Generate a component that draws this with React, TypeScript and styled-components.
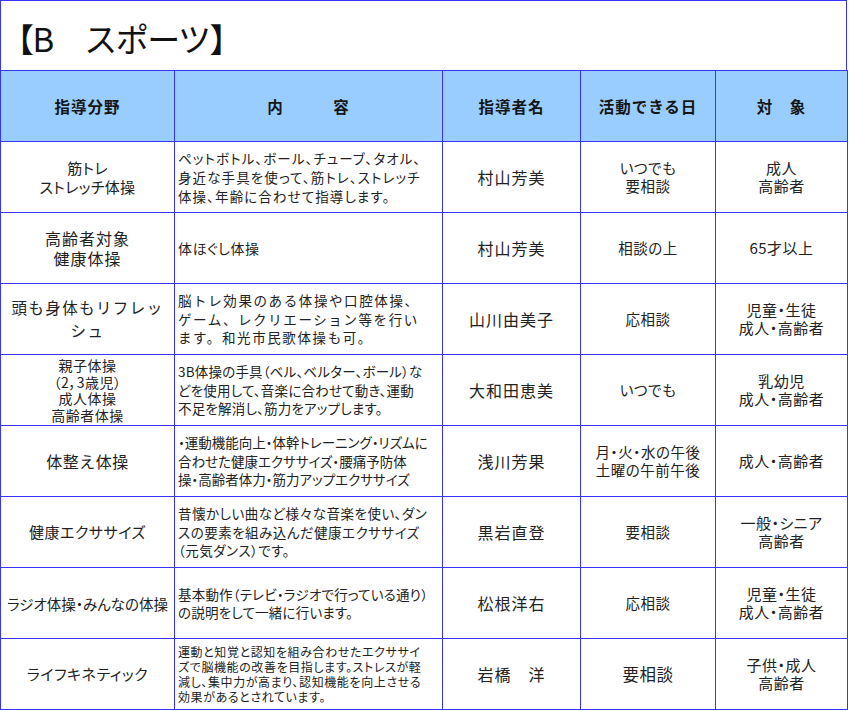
import React from "react";
import styled, { createGlobalStyle } from "styled-components";

const GlobalStyle = createGlobalStyle`
  body {
    margin: 0;
    background: #ffffff;
    font-family: "Noto Sans CJK JP", "Noto Sans", sans-serif;
    color: #222;
  }
`;

const LINE = "#3535ff";

const Sheet = styled.div`
  width: 847px;
`;

const Title = styled.div`
  height: 70px;
  box-sizing: border-box;
  border: 1px solid ${LINE};
  border-bottom: none;
  display: flex;
  align-items: center;
  padding: 4px 0 0 0;
  font-size: 33px;
  color: #111;
  letter-spacing: -1.5px;
`;

const Grid = styled.table`
  width: 847px;
  border-collapse: collapse;
  table-layout: fixed;
`;

const Row = styled.tr`
  height: 71px;
`;

const HeadCell = styled.th`
  border: 1px solid ${LINE};
  background: #99ccff;
  font-size: 15.5px;
  font-weight: bold;
  color: #151515;
  letter-spacing: 1px;
  white-space: pre;
  padding: 0;
`;

type CellProps = {
  $left?: boolean;
  $size: number;
  $lh?: number;
  $ls?: number;
  $palt?: boolean;
};

const Cell = styled.td<CellProps>`
  border: 1px solid ${LINE};
  padding: ${(p) => (p.$left ? "0 0 0 3px" : "0")};
  text-align: ${(p) => (p.$left ? "left" : "center")};
  vertical-align: middle;
  font-size: ${(p) => p.$size}px;
  line-height: ${(p) => p.$lh ?? Math.round(p.$size * 1.3)}px;
  letter-spacing: ${(p) => p.$ls ?? 0}px;
  font-feature-settings: ${(p) => (p.$palt ? '"palt"' : "normal")};
  white-space: pre;
  overflow: hidden;
  color: #222;
`;

type C = { t: string; size: number; lh?: number; ls?: number; palt?: boolean };

type Entry = {
  field: C;
  detail: C;
  name: C;
  days: C;
  target: C;
};

const nm = (t: string, size = 16): C => ({ t, size, ls: 1 });
const dy = (t: string, size = 14.5): C => ({ t, size, lh: 18, palt: true, ls: 0.5 });
const tg = (t: string): C => ({ t, size: 15, lh: 18, palt: true, ls: 0.5 });

const rows: Entry[] = [
  {
    field: { t: "筋トレ\nストレッチ体操", size: 15, lh: 19, palt: true, ls: 0.3 },
    detail: {
      t: "ペットボトル、ボール、チューブ、タオル、\n身近な手具を使って、筋トレ、ストレッチ\n体操、年齢に合わせて指導します。",
      size: 13.5,
      lh: 19,
      palt: true,
      ls: 1.1,
    },
    name: nm("村山芳美"),
    days: dy("いつでも\n要相談"),
    target: tg("成人\n高齢者"),
  },
  {
    field: { t: "高齢者対象\n健康体操", size: 16, lh: 20, ls: 1 },
    detail: { t: "体ほぐし体操", size: 14, palt: true, ls: 0.5 },
    name: nm("村山芳美"),
    days: dy("相談の上"),
    target: tg("65才以上"),
  },
  {
    field: { t: "頭も身体もリフレッ\nシュ", size: 15.5, lh: 23, ls: 1.4 },
    detail: {
      t: "脳トレ効果のある体操や口腔体操、\nゲーム、レクリエーション等を行い\nます。和光市民歌体操も可。",
      size: 13.5,
      lh: 18.5,
      ls: 1.6,
    },
    name: nm("山川由美子"),
    days: dy("応相談"),
    target: tg("児童・生徒\n成人・高齢者"),
  },
  {
    field: { t: "親子体操\n（2，3歳児）\n成人体操\n高齢者体操", size: 14, lh: 16.5, palt: true, ls: 0.5 },
    detail: {
      t: "3B体操の手具（ベル、ベルター、ボール）な\nどを使用して、音楽に合わせて動き、運動\n不足を解消し、筋力をアップします。",
      size: 13.5,
      lh: 18.5,
      palt: true,
      ls: 0.2,
    },
    name: nm("大和田恵美"),
    days: dy("いつでも"),
    target: tg("乳幼児\n成人・高齢者"),
  },
  {
    field: { t: "体整え体操", size: 16, ls: 0.5 },
    detail: {
      t: "・運動機能向上・体幹トレーニング・リズムに\n合わせた健康エクササイズ・腰痛予防体\n操・高齢者体力・筋力アップエクササイズ",
      size: 13.5,
      lh: 18.5,
      palt: true,
    },
    name: nm("浅川芳果"),
    days: dy("月・火・水の午後\n土曜の午前午後"),
    target: tg("成人・高齢者"),
  },
  {
    field: { t: "健康エクササイズ", size: 15, palt: true, ls: 0.5 },
    detail: {
      t: "昔懐かしい曲など様々な音楽を使い、ダン\nスの要素を組み込んだ健康エクササイズ\n（元気ダンス）です。",
      size: 13.5,
      lh: 18.5,
      palt: true,
      ls: 0.5,
    },
    name: nm("黒岩直登"),
    days: dy("要相談"),
    target: tg("一般・シニア\n高齢者"),
  },
  {
    field: { t: "ラジオ体操・みんなの体操", size: 14.5, palt: true },
    detail: {
      t: "基本動作（テレビ・ラジオで行っている通り）\nの説明をして一緒に行います。",
      size: 13.5,
      lh: 18.5,
      palt: true,
      ls: 0.2,
    },
    name: nm("松根洋右"),
    days: dy("応相談"),
    target: tg("児童・生徒\n成人・高齢者"),
  },
  {
    field: { t: "ライフキネティック", size: 15, palt: true, ls: 0.5 },
    detail: {
      t: "運動と知覚と認知を組み合わせたエクササイ\nズで脳機能の改善を目指します。ストレスが軽\n減し、集中力が高まり、認知機能を向上させる\n効果があるとされています。",
      size: 12,
      lh: 15,
      palt: true,
      ls: 0.6,
    },
    name: nm("岩橋　洋"),
    days: dy("要相談", 16.5),
    target: tg("子供・成人\n高齢者"),
  },
];

const Body = ({ c, left }: { c: C; left?: boolean }) => (
  <Cell $left={left} $size={c.size} $lh={c.lh} $ls={c.ls} $palt={c.palt}>
    {c.t}
  </Cell>
);

export default function App() {
  return (
    <Sheet>
      <GlobalStyle />
      <Title>【B　スポーツ】</Title>
      <Grid>
        <colgroup>
          <col style={{ width: 174 }} />
          <col style={{ width: 268 }} />
          <col style={{ width: 138 }} />
          <col style={{ width: 135 }} />
          <col style={{ width: 132 }} />
        </colgroup>
        <thead>
          <Row>
            <HeadCell>指導分野</HeadCell>
            <HeadCell>内　　　容</HeadCell>
            <HeadCell>指導者名</HeadCell>
            <HeadCell>活動できる日</HeadCell>
            <HeadCell>対　象</HeadCell>
          </Row>
        </thead>
        <tbody>
          {rows.map((r, i) => (
            <Row key={i}>
              <Body c={r.field} />
              <Body c={r.detail} left />
              <Body c={r.name} />
              <Body c={r.days} />
              <Body c={r.target} />
            </Row>
          ))}
        </tbody>
      </Grid>
    </Sheet>
  );
}
